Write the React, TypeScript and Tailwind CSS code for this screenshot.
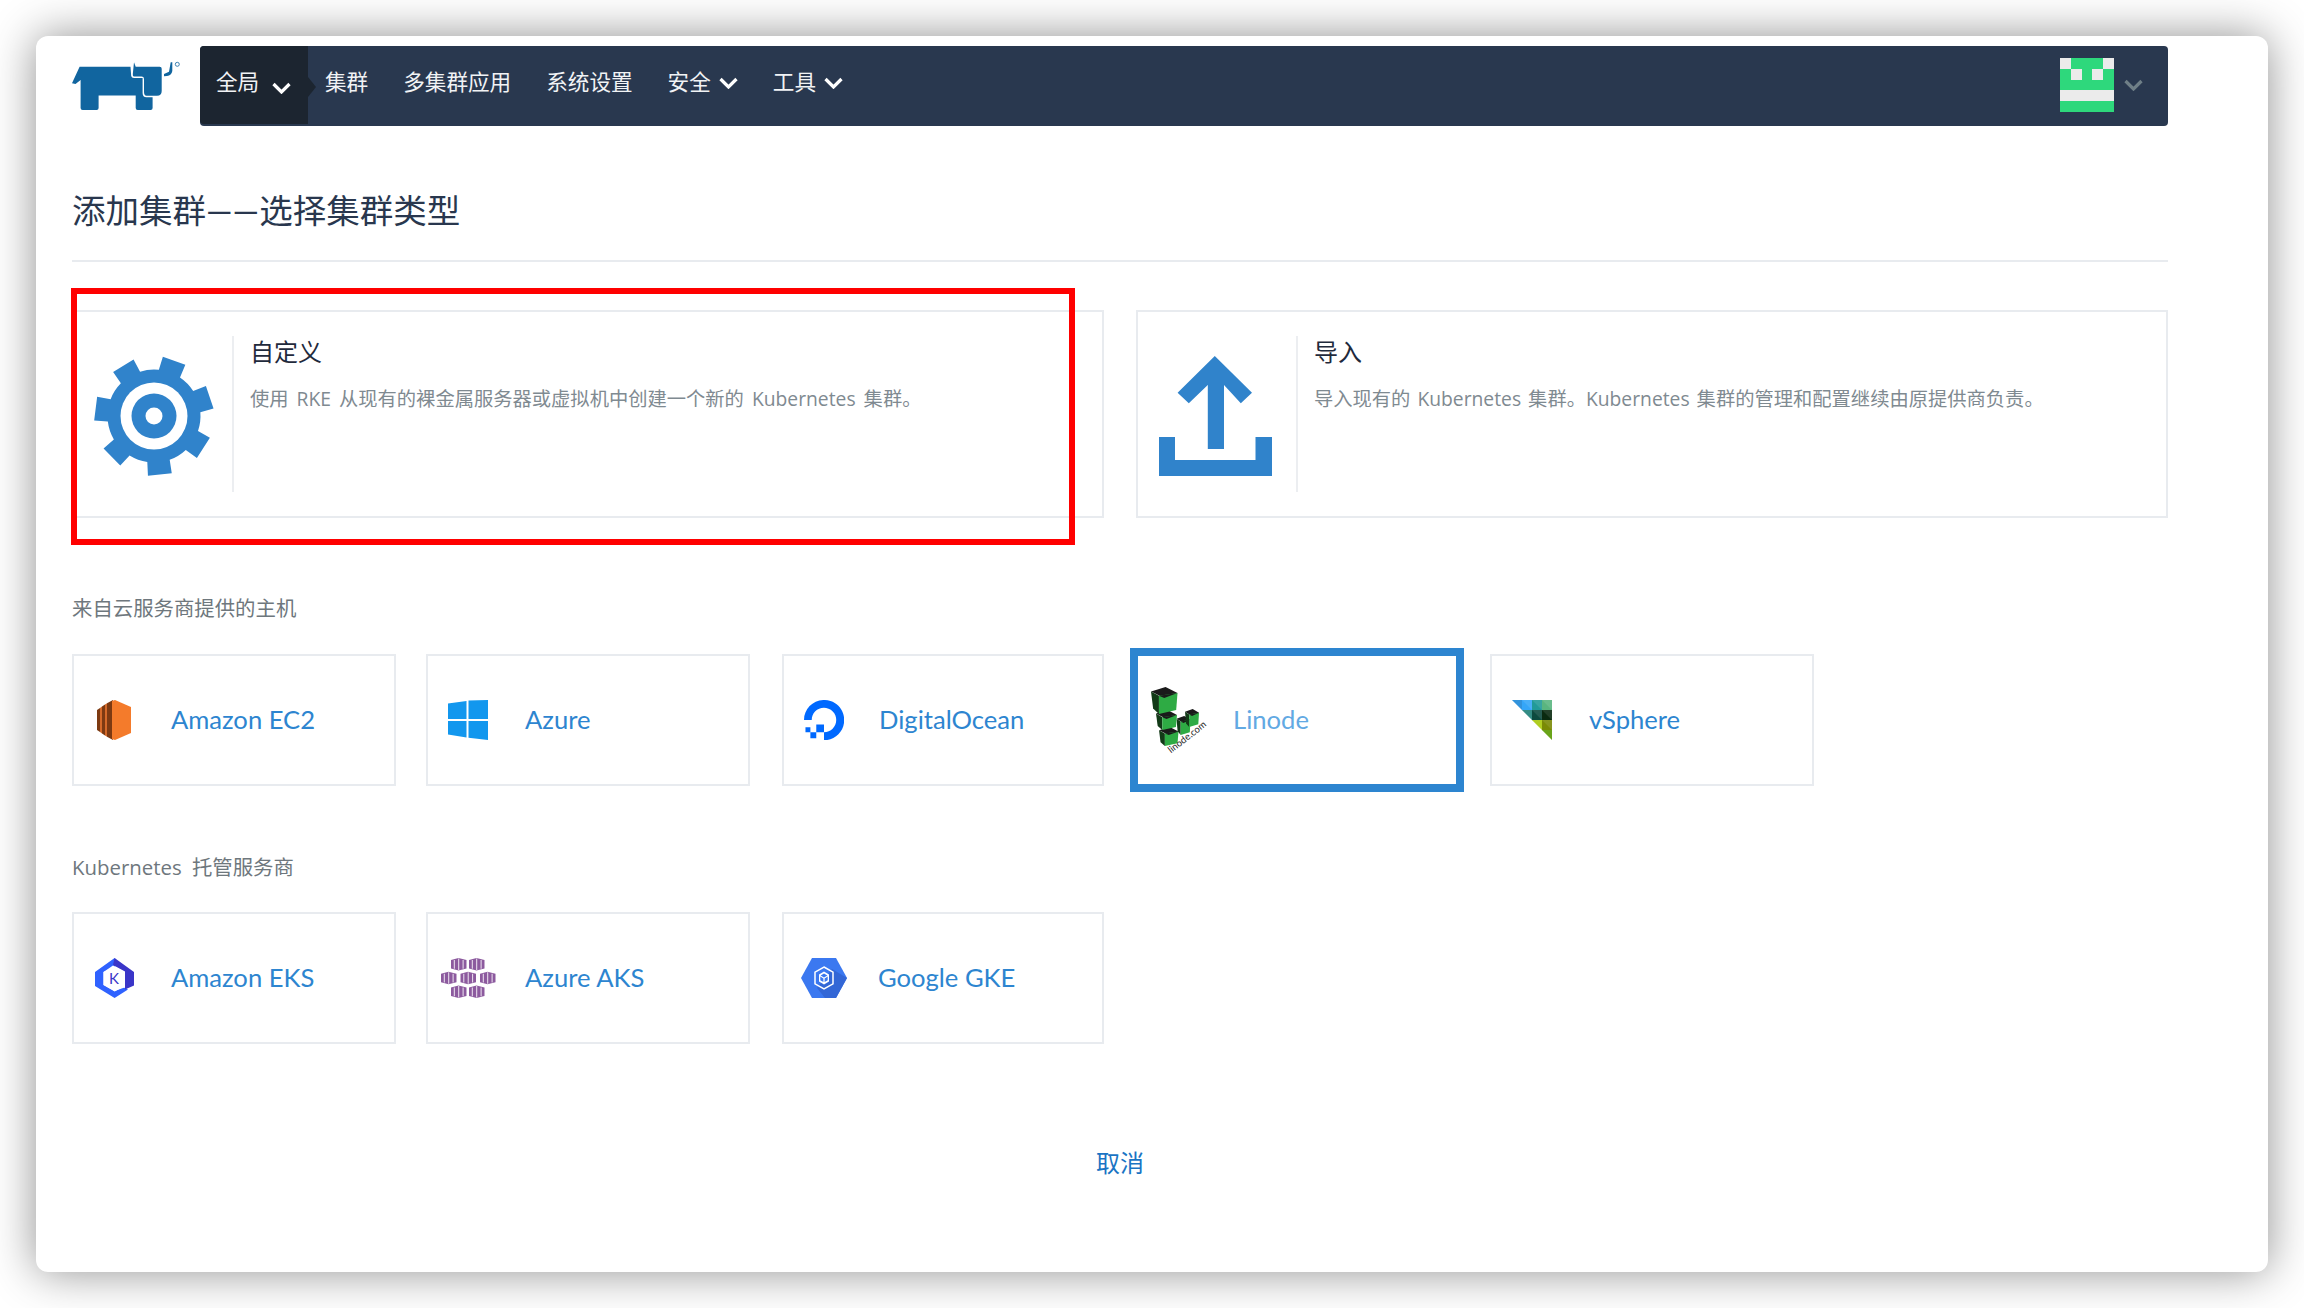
import React from "react";

const Chevron = ({ className = "", color = "#ffffff" }: { className?: string; color?: string }) => (
  <svg viewBox="0 0 19 12" width="19" height="12" className={className}>
    <path d="M1.5 2 L9.5 10 L17.5 2" fill="none" stroke={color} strokeWidth="3.2" />
  </svg>
);

const Logo = () => (
  <svg viewBox="73 60 110 52" width="110" height="52" className="block">
    <path
      fill="#11659f"
      d="M80.6 66.7 H131.5 L132.2 76 Q132.5 78 135 78 H143.6 V93 Q143.6 97.2 147.5 97.2 H153.6 V108 Q153.6 110 151.6 110 H138.7 Q136.7 110 136.7 108 V95.6 H99.6 V108 Q99.6 110 97.6 110 H83.6 Q81.6 110 81.6 108 V80 L76.5 84 L73 83.3 Z"
    />
    <path
      fill="#11659f"
      d="M135 62.3 L136.7 66.7 H160.7 Q162.7 66.7 162.7 68.7 V91 Q162.7 95.7 158 95.7 H147.5 Q145 95.7 145 92 V79 Q145 76.6 142.5 76.6 H135 Q133.6 76.6 133.8 74 Z"
    />
    <path fill="#11659f" d="M165 74 L170 71.7 L171.7 62.3 L173.3 62.3 L173.3 71 Q172.5 75.7 168 76 L165 76.3 Z" />
    <circle cx="178.3" cy="64.3" r="2" fill="none" stroke="#11659f" strokeWidth="0.8" />
  </svg>
);

const Avatar = () => {
  const g = "#2ed87c";
  const w = "#ebebeb";
  const rows = [
    [w, g, g, g, w],
    [g, w, g, w, g],
    [g, g, g, g, g],
    [w, w, w, w, w],
    [g, g, g, g, g],
  ];
  return (
    <svg viewBox="0 0 5 5" width="54" height="54" shapeRendering="crispEdges" className="block">
      {rows.flatMap((r, y) => r.map((c, x) => <rect key={`${x}-${y}`} x={x} y={y} width="1" height="1" fill={c} />))}
    </svg>
  );
};

const gearPath = () => {
  const cx = 62;
  const cy = 60;
  const pt = (r: number, deg: number) => {
    const a = ((deg - 90) * Math.PI) / 180;
    return `${(cx + r * Math.cos(a)).toFixed(2)} ${(cy + r * Math.sin(a)).toFixed(2)}`;
  };
  let d = "";
  for (let i = 0; i < 7; i++) {
    const c = 20 + (i * 360) / 7;
    d += `${i === 0 ? "M" : "L"}${pt(46.5, c - 14)} L${pt(60, c - 11.5)} L${pt(60, c + 11.5)} L${pt(46.5, c + 14)} `;
    d += `A46.5 46.5 0 0 1 ${pt(46.5, c + 360 / 7 - 14)} `;
  }
  return d + "Z";
};

const Gear = () => (
  <svg viewBox="0 0 124 120" width="124" height="120" className="block">
    <path d={gearPath()} fill="#3083cb" />
    <circle cx="62" cy="60" r="33.5" fill="#ffffff" />
    <circle cx="62" cy="60" r="22.5" fill="#3083cb" />
    <circle cx="62" cy="60" r="8.5" fill="#ffffff" />
  </svg>
);

const Upload = () => (
  <svg viewBox="0 0 113 120" width="113" height="120" className="block">
    <path
      fill="#3083cb"
      d="M55.8 0 L93 36.7 L81.8 47.3 L65 29 V93 H48.8 V29 L29.8 47.3 L18.6 36.7 Z M0 81 H16 V104 H96.5 V81 H113 V120 H0 Z"
    />
  </svg>
);

const Ec2 = () => (
  <svg viewBox="0 0 34 40" width="34" height="40" className="block">
    <path fill="#7d3a12" d="M0 10 L3 8 V32 L0 30 Z" />
    <path fill="#d46a2a" d="M3 8 L5 6.5 V33.5 L3 32 Z" />
    <path fill="#7d3a12" d="M5 6.5 L8 4.5 V35.5 L5 33.5 Z" />
    <path fill="#d46a2a" d="M8 4.5 L10 3.2 V36.8 L8 35.5 Z" />
    <path fill="#7d3a12" d="M10 3.2 L16 0 V40 L10 36.8 Z" />
    <path fill="#f47b2b" d="M15 1 L18 0 L34 7 V33 L18 40 L15 39 Z" />
  </svg>
);

const AzureIcon = () => (
  <svg viewBox="0 0 40 40" width="40" height="40" className="block">
    <path fill="#1297ee" d="M0 3.5 L18.5 1 V19 H0 Z M20.5 0.5 L40 0 V19 H20.5 Z M0 21 H18.5 V37.5 L0 34.5 Z M20.5 21 H40 V40 L20.5 37.8 Z" />
  </svg>
);

const DigitalOcean = () => (
  <svg viewBox="0 0 65.2 65.2" width="40" height="40" className="block">
    <path
      fill="#0069ff"
      d="M32.6 65.2V52.6c13.4 0 23.7-13.2 18.6-27.3c-1.9-5.2-6-9.4-11.2-11.2C25.8 9 12.6 19.2 12.6 32.6H0C0 11.2 20.7-5.4 43.2 1.6c9.8 3.1 17.7 10.9 20.7 20.7c7 22.6-9.6 43.3-31 43.3H32.6z"
    />
    <path fill="#0069ff" d="M32.6 52.6H20V40h12.6zM20 62.2H10.4V52.6H20zM10.4 52.6H2.4V44.6h8z" />
  </svg>
);

const Cube = ({ x, y, w, h, t }: { x: number; y: number; w: number; h: number; t: number }) => (
  <g>
    <path fill="#1a1a1a" d={`M${x} ${y + t * 0.4} L${x + w * 0.55} ${y} L${x + w} ${y + t * 0.55} L${x + w * 0.5} ${y + t} Z`} />
    <path fill="#123a17" d={`M${x} ${y + t * 0.4} L${x + w * 0.3} ${y + t * 0.8} L${x + w * 0.3} ${y + h} L${x + w * 0.08} ${y + h * 0.8} Z`} />
    <path fill="#2eab44" d={`M${x + w * 0.3} ${y + t * 0.8} L${x + w} ${y + t * 0.55} L${x + w * 0.95} ${y + h * 0.85} L${x + w * 0.3} ${y + h} Z`} />
    <path fill="#1a1a1a" d={`M${x + w * 0.3} ${y + t * 0.8} L${x + w * 0.5} ${y + t} L${x + w} ${y + t * 0.55} Z`} />
  </g>
);

const Linode = () => (
  <svg viewBox="0 0 56 67" width="56" height="67" className="block">
    <Cube x={8} y={40} w={19.5} h={19} t={8} />
    <Cube x={25.5} y={29} w={14} h={19} t={7} />
    <Cube x={34} y={22} w={14} h={18} t={7} />
    <Cube x={5} y={23} w={21} h={20} t={9} />
    <Cube x={0} y={0} w={26.5} h={27} t={11} />
    <text x="20" y="66.5" transform="rotate(-38 20 66.5)" fontSize="9.5" fill="#222222" fontFamily="Lato, sans-serif">
      linode.com
    </text>
  </svg>
);

const VSphere = () => {
  const cols: string[][] = [
    ["#1b87d8", "#35a6f8", "#219a98", "#5ab57f"],
    ["", "#1e7f78", "#0d4a3f", "#0a2a10"],
    ["", "", "#a8c80a", "#7a8a05"],
    ["", "", "", "#5a9a00"],
  ];
  return (
    <svg viewBox="0 0 40 40" width="40" height="40" className="block">
      <defs>
        <clipPath id="vs-clip">
          <path d="M0 0 H40 V40 Z" />
        </clipPath>
      </defs>
      <g clipPath="url(#vs-clip)">
        {cols.flatMap((r, y) =>
          r.map((c, x) =>
            c ? (
              <g key={`${x}-${y}`}>
                <rect x={x * 10} y={y * 10} width="10.2" height="10.2" fill={c} />
                <path d={`M${x * 10} ${y * 10} H${x * 10 + 10} V${y * 10 + 10} Z`} fill="#ffffff" opacity="0.1" />
              </g>
            ) : null,
          ),
        )}
      </g>
    </svg>
  );
};

const Eks = () => (
  <svg viewBox="0 0 40 40" width="40" height="40" className="block">
    <path fill="#2f62ff" d="M19.6 0 L25 6 L8.5 14 V27 L19.6 33.5 L28 29 L33 31.5 L19.6 40 L0 28 V14 Z" />
    <path fill="#3a35c8" d="M19.6 0 L39 14 V27.5 L30 31.5 V13.5 L18 7 Z" />
    <path fill="#ffffff" d="M18 7.5 L29.5 14 V29.5 L19.6 33 L8.5 27 V14 Z" />
    <text x="19" y="26" textAnchor="middle" fontSize="15" fill="#3a35c8" fontFamily="Lato, sans-serif">
      K
    </text>
  </svg>
);

const Hex = ({ x, y }: { x: number; y: number }) => (
  <g>
    <path fill="#8c5a9e" d={`M${x} ${y + 2} L${x + 7.5} ${y} L${x + 15.5} ${y + 2} V${y + 10.5} L${x + 7.5} ${y + 12.6} L${x} ${y + 10.5} Z`} />
    <path fill="#efe6f2" d={`M${x + 2.8} ${y + 2} H${x + 3.8} V${y + 10.8} H${x + 2.8} Z M${x + 7.2} ${y + 0.6} H${x + 8.2} V${y + 12} H${x + 7.2} Z M${x + 11.6} ${y + 2} H${x + 12.6} V${y + 10.8} H${x + 11.6} Z`} />
  </g>
);

const Aks = () => (
  <svg viewBox="0 0 55 40" width="55" height="40" className="block">
    <Hex x={10} y={0} />
    <Hex x={28} y={0} />
    <Hex x={0} y={13.7} />
    <Hex x={19.5} y={13.7} />
    <Hex x={39} y={13.7} />
    <Hex x={10} y={27.4} />
    <Hex x={28} y={27.4} />
  </svg>
);

const Gke = () => (
  <svg viewBox="0 0 46 40" width="46" height="40" className="block">
    <path fill="#3b78f0" d="M11 0 H35 L46 20 L35 40 H11 L0 20 Z" />
    <path fill="#3367d6" d="M31 11 L46 20 L35 40 H24 L16 30 Z" />
    <path fill="none" stroke="#ffffff" strokeWidth="1.5" d="M23 9 L32 14.2 V25.8 L23 31 L14 25.8 V14.2 Z" />
    <path fill="#ffffff" d="M23 13.5 L28 16.4 V23.6 L23 26.5 L18 23.6 V16.4 Z" />
    <path fill="#3b78f0" d="M23 15.5 L26.4 17.5 L23 19.4 L19.6 17.5 Z M19.3 18.6 L22.4 20.4 V24 L19.3 22.2 Z M26.7 18.6 L23.6 20.4 V24 L26.7 22.2 Z" />
  </svg>
);

const Provider = ({
  name,
  icon,
  iconBox,
  width = "w-[324px]",
}: {
  name: string;
  icon: React.ReactNode;
  iconBox: string;
  width?: string;
}) => (
  <div className={`flex h-[132px] shrink-0 items-center border-2 border-[#e8ebef] bg-white ${width}`}>
    <div className={iconBox}>{icon}</div>
    <span className="text-[25.6px] leading-none text-[#2d85d0]">{name}</span>
  </div>
);

const NavText = ({ children }: { children: React.ReactNode }) => (
  <span className="text-[21.6px] leading-none text-[#f1f3f5]">{children}</span>
);

export default function App() {
  return (
    <div className="h-[1308px] w-[2304px] overflow-hidden bg-white p-[36px] font-[Lato,'Noto_Sans_CJK_SC',sans-serif]">
      <div className="h-[1236px] w-[2232px] rounded-[12px] bg-white px-[36px] pt-[10px] shadow-[0_0_46px_rgba(0,0,0,0.44)]">
        <header className="flex items-start">
          <div className="w-[128px] shrink-0 pt-[14px]">
            <Logo />
          </div>
          <nav className="flex h-[80px] w-[1968px] items-start rounded-[4px] bg-[#29384f]">
            <div className="relative flex h-[78px] w-[108px] shrink-0 items-start rounded-tl-[4px] rounded-bl-[4px] bg-[#1c2530] pl-[16px] pt-[26px]">
              <NavText>全局</NavText>
              <Chevron className="absolute left-[72px] top-[36px]" />
              <span className="absolute right-[-8px] top-[31px] h-0 w-0 border-y-[10px] border-l-[8px] border-y-transparent border-l-[#1c2530]" />
            </div>
            <div className="ml-[17px] flex items-center gap-[35px] pt-[26px]">
              <NavText>集群</NavText>
              <NavText>多集群应用</NavText>
              <NavText>系统设置</NavText>
              <span className="flex items-center gap-[8px]">
                <NavText>安全</NavText>
                <Chevron />
              </span>
              <span className="flex items-center gap-[8px]">
                <NavText>工具</NavText>
                <Chevron />
              </span>
            </div>
            <div className="ml-auto flex items-center gap-[10px] pr-[25px] pt-[12px]">
              <Avatar />
              <Chevron color="#6f7f87" />
            </div>
          </nav>
        </header>

        <h1 className="mt-[66px] text-[33.5px] font-normal leading-[36px] text-[#29374e]">添加集群——选择集群类型</h1>
        <div className="mt-[32px] h-[2px] w-[2096px] bg-[#e8ebef]" />

        <section className="relative mt-[48px] flex w-[2096px] justify-between">
          <div className="flex h-[208px] w-[1032px] border-2 border-[#e8ebef] bg-white py-[24px]">
            <div className="flex w-[160px] shrink-0 justify-end border-r-2 border-[#eceef1] pr-[16px] pt-[20px]">
              <Gear />
            </div>
            <div className="pl-[16px] pt-[2px]">
              <h3 className="text-[24px] font-normal leading-[28px] text-[#1f2a3c]">自定义</h3>
              <p className="mt-[20px] font-['Open_Sans','Noto_Sans_CJK_SC',sans-serif] text-[19.3px] leading-[26px] text-[#7f8a91] [word-spacing:3px]">
                使用 RKE 从现有的裸金属服务器或虚拟机中创建一个新的 Kubernetes 集群。
              </p>
            </div>
          </div>
          <div className="flex h-[208px] w-[1032px] border-2 border-[#e8ebef] bg-white py-[24px]">
            <div className="flex w-[160px] shrink-0 justify-end border-r-2 border-[#eceef1] pr-[24px] pt-[20px]">
              <Upload />
            </div>
            <div className="pl-[16px] pt-[2px]">
              <h3 className="text-[24px] font-normal leading-[28px] text-[#1f2a3c]">导入</h3>
              <p className="mt-[20px] font-['Open_Sans','Noto_Sans_CJK_SC',sans-serif] text-[19.3px] leading-[26px] text-[#7f8a91] [word-spacing:2px]">
                导入现有的 Kubernetes 集群。Kubernetes 集群的管理和配置继续由原提供商负责。
              </p>
            </div>
          </div>
          <div className="absolute left-[-1px] top-[-22px] h-[257px] w-[1004px] border-[6px] border-[#ff0000]" />
        </section>

        <h4 className="mt-[76px] font-['Open_Sans','Noto_Sans_CJK_SC',sans-serif] text-[20.4px] font-normal leading-[28px] text-[#6e777d]">
          来自云服务商提供的主机
        </h4>
        <div className="mt-[26px] flex items-center">
          <Provider name="Amazon EC2" icon={<Ec2 />} iconBox="ml-[23px] mr-[40px] w-[34px]" />
          <div className="ml-[30px]">
            <Provider name="Azure" icon={<AzureIcon />} iconBox="ml-[20px] mr-[37px] w-[40px]" />
          </div>
          <div className="ml-[32px]">
            <Provider name="DigitalOcean" icon={<DigitalOcean />} iconBox="ml-[20px] mr-[35px] w-[40px]" width="w-[322px]" />
          </div>
          <div className="ml-[26px] flex h-[144px] w-[334px] shrink-0 items-center border-[8px] border-[#2d85d0] bg-white">
            <div className="ml-[13px] mr-[26px] w-[56px]">
              <Linode />
            </div>
            <span className="text-[25.6px] leading-none text-[#62a9e3]">Linode</span>
          </div>
          <div className="ml-[26px]">
            <Provider name="vSphere" icon={<VSphere />} iconBox="ml-[20px] mr-[37px] w-[40px]" />
          </div>
        </div>

        <h4 className="mt-[61px] font-['Open_Sans','Noto_Sans_CJK_SC',sans-serif] text-[20.4px] font-normal leading-[28px] text-[#6e777d] [word-spacing:5px]">
          Kubernetes 托管服务商
        </h4>
        <div className="mt-[31px] flex items-center">
          <Provider name="Amazon EKS" icon={<Eks />} iconBox="ml-[21px] mr-[36px] w-[40px]" />
          <div className="ml-[30px]">
            <Provider name="Azure AKS" icon={<Aks />} iconBox="ml-[13px] mr-[29px] w-[55px]" />
          </div>
          <div className="ml-[32px]">
            <Provider name="Google GKE" icon={<Gke />} iconBox="ml-[17px] mr-[31px] w-[46px]" width="w-[322px]" />
          </div>
        </div>

        <div className="mt-[103px] flex w-[2096px] justify-center">
          <span className="text-[24px] leading-[32px] text-[#1a74c4]">取消</span>
        </div>
      </div>
    </div>
  );
}
